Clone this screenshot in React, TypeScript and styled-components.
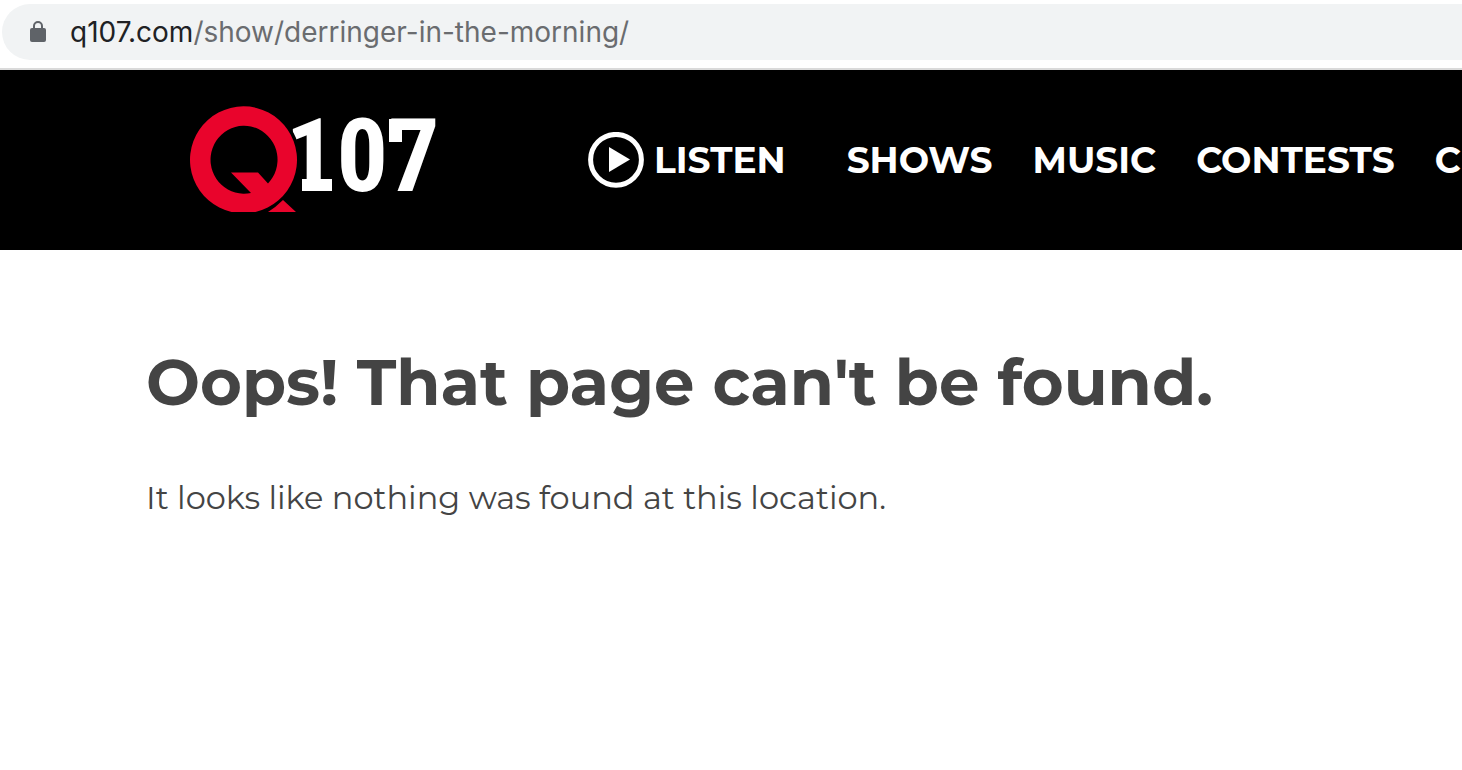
import React from "react";
import styled, { createGlobalStyle } from "styled-components";

const GlobalStyle = createGlobalStyle`
  * { box-sizing: border-box; }
  body {
    margin: 0;
    background: #fff;
    color: #444;
    font-family: Montserrat, Inter, "Open Sans", sans-serif;
    overflow-x: hidden;
  }
`;

const AddressBar = styled.div`
  height: 70px;
  padding: 4px 0 8px 2px;
  border-bottom: 2px solid #dadada;
`;

const Omnibox = styled.div`
  display: flex;
  align-items: center;
  gap: 24px;
  height: 56px;
  padding-left: 28px;
  border-radius: 28px 0 0 28px;
  background: #f1f3f4;
`;

const Url = styled.span`
  color: #6a6c6f;
  font: 400 28px/32px Inter, Roboto, sans-serif;
  white-space: nowrap;
`;

const Host = styled.span`
  color: #202124;
`;

const Header = styled.header`
  display: flex;
  align-items: center;
  height: 180px;
  padding-left: 190px;
  overflow: hidden;
  background: #000;
`;

const LogoLink = styled.a`
  flex: none;
  width: 250px;
  height: 108px;
  margin-right: 148px;
`;

const LogoArt = styled.svg`
  display: block;
  overflow: visible;
`;

const LogoDigits = styled.text`
  fill: #fff;
  font: 700 102px "Roboto Condensed", "Liberation Sans Narrow", sans-serif;
`;

const Nav = styled.nav`
  display: flex;
  align-items: center;
  gap: 40px;
`;

const NavLink = styled.a`
  color: #fff;
  font-size: 36px;
  font-weight: 700;
  line-height: 44px;
  text-decoration: none;
  white-space: nowrap;
`;

const ListenLink = styled(NavLink)`
  display: flex;
  align-items: center;
  gap: 10px;
  margin-right: 21px;
`;

const Main = styled.main`
  padding: 94px 146px;
`;

const Title = styled.h1`
  margin: 0;
  font-size: 64px;
  font-weight: 700;
  line-height: 76px;
`;

const Message = styled.p`
  margin: 58px 0 0;
  font-size: 32px;
  line-height: 40px;
`;

function LockIcon() {
  return (
    <svg width="16" height="22" viewBox="0 0 16 22" aria-hidden="true">
      <rect y="7" width="16" height="14" rx="2" fill="#5f6368" />
      <path d="M4 8V5a4 4 0 0 1 8 0v3" fill="none" stroke="#5f6368" strokeWidth="2" />
    </svg>
  );
}

function PlayIcon() {
  return (
    <svg width="56" height="56" viewBox="0 0 56 56" aria-hidden="true">
      <circle cx="28" cy="27.800" r="25.400" fill="none" stroke="#fff" strokeWidth="5" />
      <path d="M21 15L42 27.500L21 40Z" fill="#fff" />
    </svg>
  );
}

function Logo() {
  return (
    <LogoArt width="250" height="108" viewBox="0 0 250 108" role="img" aria-label="Q107">
      <LogoDigits x="95" y="85">107</LogoDigits>
      <g fill="#fff">
        <rect x="112" y="73" width="30" height="12" />
        <rect x="199" y="13" width="13" height="23" />
      </g>
      <circle cx="53.500" cy="53.500" r="45" fill="none" stroke="#000" strokeWidth="23" />
      <g fill="#e9042c">
        <path
          fillRule="evenodd"
          d="M41.500 106A53.500 53.500 0 1 1 65.500 106ZM61 87L41 66.500H68L78 77.500A33.500 34 0 1 0 61 87Z"
        />
        <path d="M93 94L106 106H78Q86 101 93 94Z" />
      </g>
    </LogoArt>
  );
}

const links = ["SHOWS", "MUSIC", "CONTESTS", "C"];

export default function App() {
  return (
    <>
      <GlobalStyle />
      <AddressBar>
        <Omnibox>
          <LockIcon />
          <Url>
            <Host>q107.com</Host>/show/derringer-in-the-morning/
          </Url>
        </Omnibox>
      </AddressBar>
      <Header>
        <LogoLink href="/">
          <Logo />
        </LogoLink>
        <Nav>
          <ListenLink href="#listen">
            <PlayIcon />
            LISTEN
          </ListenLink>
          {links.map((name) => (
            <NavLink key={name} href={`#${name.toLowerCase()}`}>
              {name}
            </NavLink>
          ))}
        </Nav>
      </Header>
      <Main>
        <Title>Oops! That page can't be found.</Title>
        <Message>It looks like nothing was found at this location.</Message>
      </Main>
    </>
  );
}
